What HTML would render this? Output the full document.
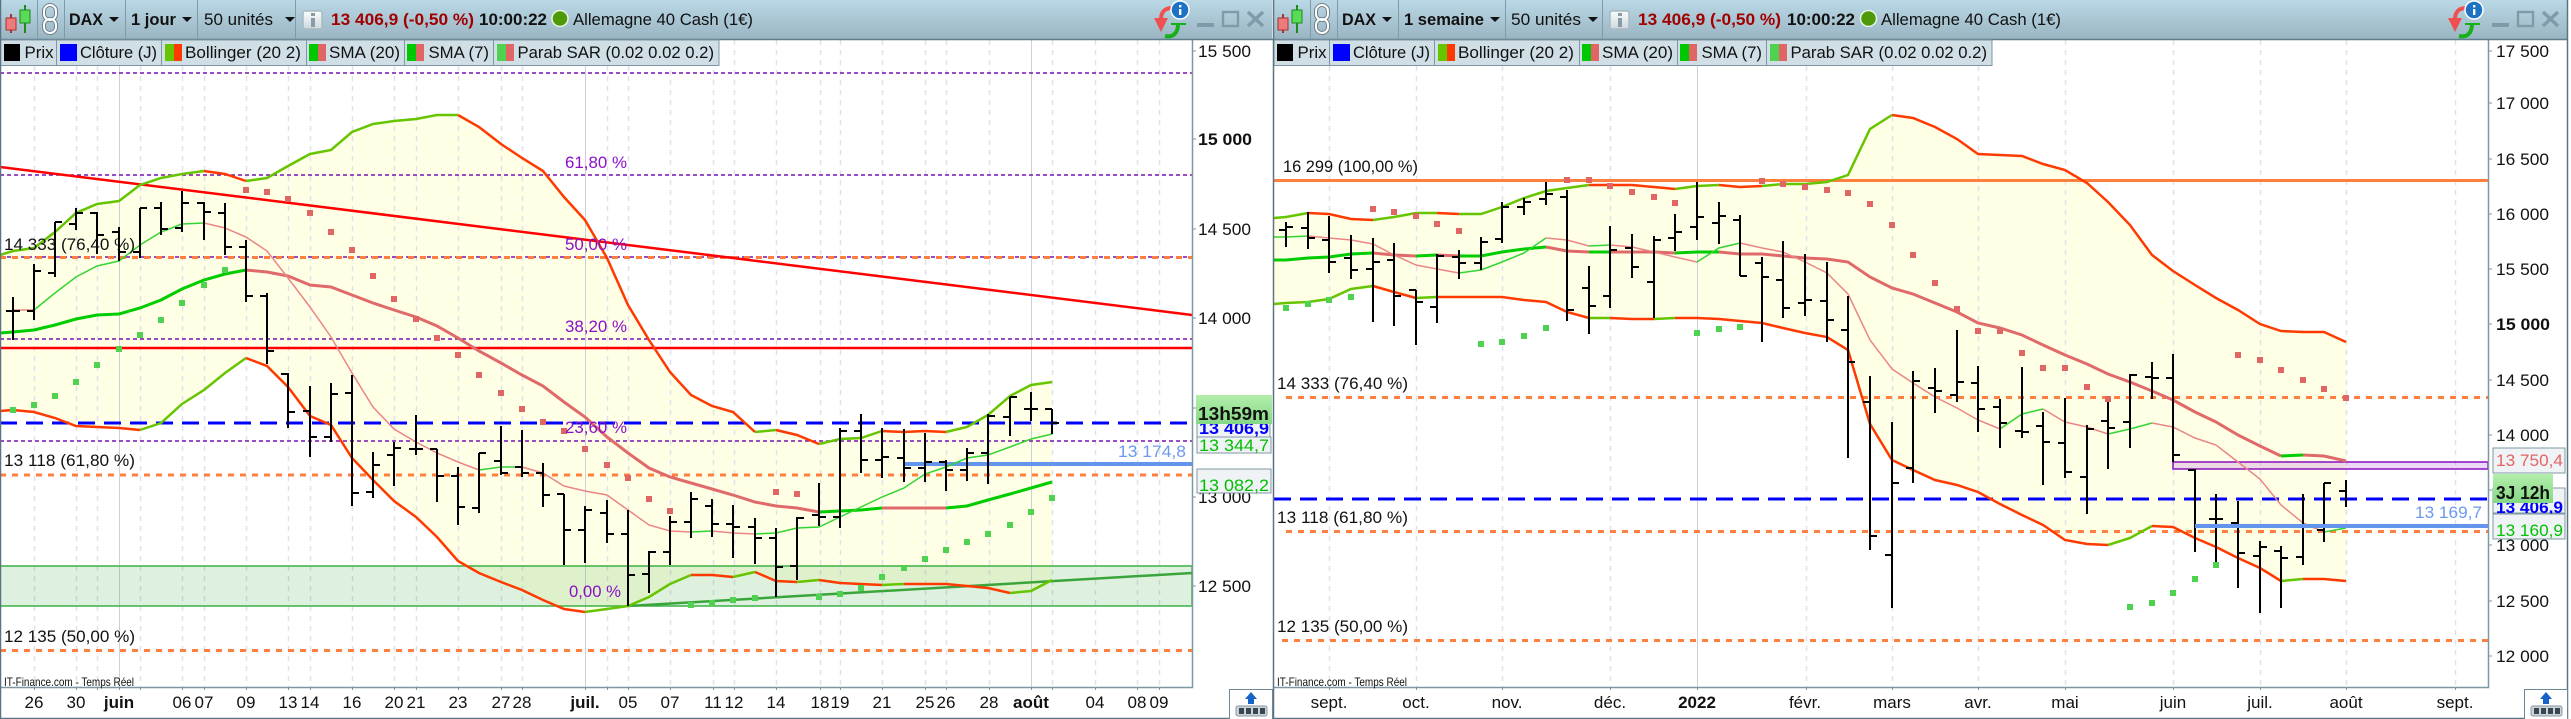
<!DOCTYPE html>
<html lang="fr"><head><meta charset="utf-8"><title>DAX</title>
<style>
html,body{margin:0;padding:0;background:#fff;width:2571px;height:719px;overflow:hidden}
svg{display:block}
text{font-family:"Liberation Sans",sans-serif;font-size:17px;fill:#111}
.b{font-weight:bold}
.p{fill:#8a10c8}
.m{text-anchor:middle}
</style></head><body>
<svg xmlns="http://www.w3.org/2000/svg" width="2571" height="719" viewBox="0 0 2571 719">
<defs>
<linearGradient id="hg" x1="0" y1="0" x2="0" y2="1"><stop offset="0" stop-color="#bad8e6"/><stop offset="1" stop-color="#9ab5c2"/></linearGradient>
<linearGradient id="gb" x1="0" y1="0" x2="0" y2="1"><stop offset="0" stop-color="#b4eeac"/><stop offset="1" stop-color="#84d884"/></linearGradient>
<linearGradient id="ib" x1="0" y1="0" x2="0" y2="1"><stop offset="0" stop-color="#fafcfc"/><stop offset="1" stop-color="#ccd8de"/></linearGradient>
<g id="cnd">
<path d="M11 14V33" stroke="#a83232" stroke-width="2"/><rect x="6" y="18" width="10" height="12" fill="#ee7a7a" stroke="#a83232"/>
<path d="M25 5V33" stroke="#1d8a1d" stroke-width="2"/><rect x="20" y="10" width="10" height="13" fill="#58dc58" stroke="#1d8a1d"/>
</g>
<g id="chn" fill="none">
<rect x="44" y="5" width="12" height="15" rx="6" stroke="#6f7f88" stroke-width="4"/><rect x="44" y="19" width="12" height="14" rx="6" stroke="#6f7f88" stroke-width="4"/>
<rect x="44" y="5" width="12" height="15" rx="6" stroke="#fff" stroke-width="2"/><rect x="44" y="19" width="12" height="14" rx="6" stroke="#fff" stroke-width="2"/>
</g>
<g id="inf"><rect x="303" y="11" width="19" height="18" rx="2" fill="url(#ib)" stroke="#a9b9c2" stroke-width="1.5"/><rect x="311" y="18" width="4" height="9" fill="#8b9ba5"/><rect x="311" y="13" width="4" height="3" fill="#8b9ba5"/></g>
<g id="ref">
<path d="M1172 8C1165 8 1161 12 1161 19" fill="none" stroke="#f05050" stroke-width="4"/><path d="M1154 18H1168L1161 32Z" fill="#f05050"/>
<path d="M1165 36C1174 38 1178 32 1178 24" fill="none" stroke="#18b018" stroke-width="4"/><path d="M1171 24H1186" stroke="#18b018" stroke-width="2"/>
<circle cx="1180" cy="10" r="9" fill="#1c72c4" stroke="#fff" stroke-width="1.5"/><rect x="1179" y="9" width="2.4" height="6" fill="#fff"/><rect x="1179" y="5" width="2.4" height="2.4" fill="#fff"/>
</g>
<g id="win"><rect x="1197" y="23" width="17" height="4" fill="#7f9aa8"/><rect x="1223" y="12" width="15" height="14" fill="none" stroke="#7f9aa8" stroke-width="2.4"/><path d="M1248 12L1263 26M1263 12L1248 26" stroke="#7f9aa8" stroke-width="3.4"/></g>
<g id="btn"><rect x="1229.500" y="689.500" width="43" height="30" fill="#fff" stroke="#6d8794"/><path d="M1251 692L1257 699H1254V704H1248V699H1245Z" fill="#1764c8"/><rect x="1236" y="706" width="31" height="10" rx="2" fill="#c9d3d8" stroke="#8b9aa3"/><path d="M1239 708h5v6h-5zM1246 708h5v6h-5zM1253 708h5v6h-5zM1260 708h5v6h-5z" fill="#3b4650"/></g>
</defs>

<rect width="2571" height="719" fill="#fff"/>

<!-- LEFT PANEL fills -->
<path fill="#ffffe6" d="M0 255L13 251 34 248 55 232 76 213 97 204 119 201 140 185 161 178 182 174 204 171 225 174 246 181 267 178 288 166 310 154 331 150 352 132 373 124 394 121 416 119 437 115 458 115 479 127 501 144 522 158 543 171 564 197 585 220 607 258 628 305 649 340 670 372 691 395 712 406 733 412 755 432 776 430 797 435 819 444 840 439 861 438 882 431 904 432 925 431 946 432 967 427 988 415 1010 396 1031 385 1052 382V580L1031 591 1010 593 988 588 967 586 946 584 925 584 904 584 882 585 861 584 840 583 819 580 797 582 776 581 755 572 733 577 712 575 691 575 670 584 649 597 628 606 607 609 585 612 564 609 543 600 522 590 501 582 479 573 458 561 437 537 416 517 394 501 373 480 352 458 331 425 310 416 288 387 267 366 246 358 225 373 204 390 182 404 161 423 140 430 119 428 97 427 76 426 55 418 34 412 13 410 0 411Z"/>

<!-- LEFT grid -->
<path stroke="#e1e1e9" stroke-width="1.500" stroke-dasharray="5 5" fill="none" d="M34.500 66V687M76.500 66V687M97.500 66V687M140.500 66V687M182.500 66V687M204.500 66V687M246.500 66V687M288.500 66V687M310.500 66V687M352.500 66V687M394.500 66V687M416.500 66V687M458.500 66V687M501.500 66V687M522.500 66V687M607.500 66V687M628.500 66V687M670.500 40V687M713.500 40V687M734.500 40V687M776.500 40V687M820.500 40V687M840.500 40V687M882.500 40V687M925.500 40V687M946.500 40V687M989.500 40V687M1052.500 40V687M1095.500 40V687M1137.500 40V687M1159.500 40V687"/>
<path stroke="#cfcfdc" stroke-width="1" fill="none" d="M119.500 66V687M585.500 66V687M1031.500 40V687"/>

<!-- LEFT band -->
<rect x="0" y="566" width="1192" height="40" fill="#2fa83a" fill-opacity=".16" stroke="#3cb043" stroke-width="1.500"/>

<!-- LEFT hlines -->
<path fill="none" stroke="#7a11b0" stroke-width="1.500" stroke-dasharray="4 3" d="M0 73H1192M0 175H1192M0 257H1192M0 339H1192M0 441H1192"/>
<path fill="none" stroke="#ff7f3f" stroke-width="3" stroke-dasharray="6 6" d="M0 257.500H1192M0 475H1192M0 650.500H1192"/>
<path fill="none" stroke="#ff0000" stroke-width="2.500" d="M0 348H1192M0 167L1192 315"/>
<path fill="none" stroke="#3aa53a" stroke-width="2.500" d="M628 606L1192 573"/>
<path fill="none" stroke="#0000ff" stroke-width="3" stroke-dasharray="17 9" d="M0 423H1192"/>
<path fill="none" stroke="#6495ed" stroke-width="4" d="M904 464H1192"/>

<!-- LEFT bollinger -->
<path fill="none" stroke="#e06a6a" stroke-width="3" d="M246 270L267 272 288 276 310 285 331 287 352 295 373 303 394 310 416 317 437 326 458 338 479 351 501 363 522 375 543 386 564 402 585 417 607 437 628 453 649 468 670 477 691 483 712 489 733 495 755 502 776 506 797 508 819 512M882 508H946"/>
<path fill="none" stroke="#00cc00" stroke-width="3" d="M0 333L13 332 34 330 55 325 76 319 97 315 119 314 140 308 161 300 182 289 204 280 225 274 246 270M819 512L840 511 861 510 882 508M946 508L967 506 988 500 1010 494 1031 488 1052 482"/>
<path fill="none" stroke="#ea8686" stroke-width="1.500" d="M13 310H34M204 223L225 228 246 237 267 251 288 278 310 307 331 337 352 373 373 407 394 429 416 442 437 453 458 462 479 470M522 467L543 473 564 486 585 491 607 495 628 510 649 525 670 531 691 532M712 531L733 533 755 534"/>
<path fill="none" stroke="#33d433" stroke-width="1.500" d="M34 310L55 293 76 277 97 266 119 261 140 245 161 232 182 224 204 223M479 470L501 467H522M691 532L712 531M755 534L776 533 797 528 819 527 840 517 861 507 882 497 904 488 925 474 946 467 967 458 988 455 1010 447 1031 439 1052 434"/>
<path fill="none" stroke="#66c400" stroke-width="2.500" d="M0 255L13 251 34 248 55 232 76 213 97 204 119 201 140 185 161 178 182 174 204 171M246 181L267 178 288 166 310 154 331 150 352 132 373 124 394 121 416 119 437 115 458 115M755 432L776 430M819 444L840 439 861 438 882 431M946 432L967 427 988 415 1010 396 1031 385 1052 382M140 430L161 423 182 404 204 390 225 373 246 358M585 612L607 609 628 606 649 597 670 584 691 575M733 577L755 572M797 582L819 580M882 585L904 584M1010 593L1031 591 1052 580"/>
<path fill="none" stroke="#ff3a00" stroke-width="2.500" d="M204 171L225 174 246 181M458 115L479 127 501 144 522 158 543 171 564 197 585 220 607 258 628 305 649 340 670 372 691 395 712 406 733 412 755 432M776 430L797 435 819 444M882 431L904 432 925 431 946 432M0 411L13 410 34 412 55 418 76 426 97 427 119 428 140 430M246 358L267 366 288 387 310 416 331 425 352 458 373 480 394 501 416 517 437 537 458 561 479 573 501 582 522 590 543 600 564 609 585 612M691 575L712 575 733 577M755 572L776 581 797 582M819 580L840 583 861 584 882 585M904 584L925 584 946 584 967 586 988 588 1010 593"/>

<!-- LEFT bars -->
<path fill="none" stroke="#000" stroke-width="2" d="M13 297V340M6 311h14M34 264V320M27 311h7M34 271h7M55 222V277M48 273h7M55 222h7M76 208V230M69 224h7M76 213h7M97 212V254M90 213h7M97 235h7M119 227V261M112 232h7M119 252h7M140 208V258M133 252h7M140 208h7M161 202V235M154 208h7M161 229h7M182 191V232M175 228h7M182 203h7M204 202V240M197 203h7M204 212h7M225 203V255M218 213h7M225 247h7M246 240V302M239 247h7M246 296h7M267 293V364M260 296h7M267 351h7M288 373V428M281 374h7M288 412h7M310 386V457M303 411h7M310 437h7M331 383V442M324 437h7M331 394h7M352 375V506M345 393h7M352 493h7M373 452V498M366 492h7M373 465h7M394 442V486M387 455h7M394 448h7M416 415V455M409 449h14M437 449V502M430 449h7M437 476h7M458 467V525M451 476h7M458 507h7M479 453V513M472 508h7M479 453h7M501 426V475M494 461h7M501 473h7M522 430V477M515 467h7M522 473h7M543 463V507M536 473h7M543 495h7M564 494V565M557 494h7M564 530h7M585 506V563M578 530h7M585 510h7M607 500V543M600 513h7M607 534h7M628 510V606M621 534h7M628 575h7M649 551V593M642 574h7M649 552h7M670 516V565M663 552h7M670 522h7M691 492V538M684 522h7M691 499h7M712 499V537M705 506h7M712 524h7M733 505V558M726 524h7M733 527h7M755 518V564M748 527h7M755 538h7M776 528V597M769 538h7M776 567h7M797 517V580M790 566h7M797 518h7M819 483V526M812 515h7M819 517h7M840 428V528M833 517h7M840 431h7M861 414V473M854 431h7M861 460h7M882 428V478M875 460h7M882 457h7M904 429V482M897 458h7M904 468h7M925 433V482M918 468h7M925 462h7M946 460V491M939 462h7M946 470h7M967 448V481M960 470h7M967 453h7M988 414V484M981 453h7M988 416h7M1010 397V436M1003 417h7M1010 397h7M1031 392V421M1024 409h14M1052 409V434M1045 409h7M1052 423h7"/>

<!-- LEFT SAR -->
<path fill="none" stroke="#4fd24f" stroke-width="6" d="M10 410h6M31 405h6M52 396h6M73 382h6M94 365h6M116 349h6M137 335h6M158 320h6M179 303h6M201 285h6M222 270h6M688 605h6M709 603h6M730 600h6M752 598h6M816 597h6M837 594h6M858 588h6M879 577h6M901 568h6M922 559h6M943 550h6M964 542h6M985 534h6M1007 525h6M1028 512h6M1049 498h6"/>
<path fill="none" stroke="#e06666" stroke-width="6" d="M243 190h6M264 192h6M285 199h6M307 213h6M328 232h6M349 250h6M370 276h6M391 299h6M413 319h6M434 338h6M455 355h6M476 375h6M498 393h6M519 409h6M540 422h6M561 431h6M582 449h6M604 465h6M625 478h6M646 499h6M667 511h6M773 492h6M794 494h6"/>

<!-- RIGHT panel fill -->
<path fill="#ffffe6" d="M1274 218L1286 217 1308 213 1329 214 1351 219 1373 220 1394 217 1416 213 1437 213 1459 214 1481 214 1502 207 1524 198 1546 191 1567 188 1589 185 1610 185 1632 185 1654 187 1675 189 1697 186 1719 185 1740 187 1762 186 1783 184 1805 184 1827 182 1848 175 1870 129 1892 115 1913 118 1935 127 1957 139 1978 154 2000 155 2022 156 2043 164 2065 170 2087 183 2108 202 2130 225 2152 255 2173 271 2195 285 2216 298 2238 310 2260 324 2281 331 2303 332 2324 332 2346 342V581L2324 579 2303 579 2281 581 2260 568 2238 558 2216 547 2195 538 2173 527 2152 526 2130 538 2108 545 2087 544 2065 540 2043 525 2022 515 2000 504 1978 492 1957 485 1935 480 1913 470 1892 460 1870 424 1848 350 1827 337 1805 333 1783 328 1762 323 1740 321 1719 319 1697 318 1675 318 1654 319 1632 319 1610 318 1589 318 1567 312 1546 302 1524 300 1502 297 1481 297 1459 297 1437 297 1416 298 1394 292 1373 286 1351 289 1329 299 1308 302 1286 303 1274 304Z"/>

<path stroke="#e1e1e9" stroke-width="1.500" stroke-dasharray="5 5" fill="none" d="M1329.500 66V687M1416.500 66V687M1502.500 66V687M1610.500 66V687M1806.500 66V687M1892.500 66V687M1978.500 66V687M2065.500 40V687M2173.500 40V687M2260.500 40V687M2346.500 40V687M2455.500 40V687"/>
<path stroke="#cfcfdc" stroke-width="1" fill="none" d="M1697.500 66V687"/>

<rect x="2173" y="462" width="315" height="7" fill="#a040d8" fill-opacity=".2" stroke="#8a0fc0" stroke-width="1.500"/>
<path fill="none" stroke="#ff7f3f" stroke-width="3" d="M1274 180.500H2488"/>
<path fill="none" stroke="#ff7f3f" stroke-width="3" stroke-dasharray="6 6" d="M1286 397.500H2488M1286 531.500H2488M1282 640.500H2488"/>
<path fill="none" stroke="#0000ff" stroke-width="3" stroke-dasharray="17 9" d="M1274 499H2488"/>

<!-- RIGHT MAs -->
<path fill="none" stroke="#e06a6a" stroke-width="3" d="M1373 253L1394 255 1416 256M1437 255L1459 256M1546 247L1567 251 1589 252M1610 252L1632 252 1654 252 1675 253M1719 252L1740 254 1762 254 1783 256 1805 258 1827 259 1848 262 1870 277 1892 288 1913 294 1935 303 1957 312 1978 323 2000 328 2022 335 2043 345 2065 355 2087 364 2108 374 2130 382 2152 391 2173 400 2195 412 2216 422 2238 435 2260 446 2281 456M2303 455L2324 456 2346 461"/>
<path fill="none" stroke="#00cc00" stroke-width="3" d="M1274 260L1286 260 1308 258 1329 257 1351 254 1373 253M1416 256L1437 255M1459 256L1481 256 1502 252 1524 249 1546 247M1589 252L1610 252M1675 253L1697 252 1719 252M2281 456L2303 455"/>
<path fill="none" stroke="#ea8686" stroke-width="1.500" d="M1308 236L1329 238 1351 240 1373 244 1394 255 1416 265 1437 269 1459 273M1546 238L1567 240 1589 246M1610 245L1632 247 1654 252 1675 257 1697 262M1740 243L1762 248 1783 252 1805 262 1827 273 1848 294 1870 340 1892 369 1913 383 1935 397 1957 408 1978 420 2000 429M2043 409L2065 422 2087 427 2108 434M2152 423L2173 427 2195 438 2216 445 2238 462 2260 479 2281 505 2303 523 2324 532"/>
<path fill="none" stroke="#33d433" stroke-width="1.500" d="M1274 237L1286 237 1308 236M1459 273L1481 270 1502 262 1524 253 1546 238M1589 246L1610 245M1697 262L1719 248 1740 243M2000 429L2022 414 2043 409M2108 434L2130 429 2152 423M2324 532L2346 528"/>
<path fill="none" stroke="#66c400" stroke-width="2.500" d="M1274 218L1286 217 1308 213M1373 220L1394 217 1416 213 1437 213M1459 214L1481 214 1502 207 1524 198 1546 191 1567 188 1589 185M1675 189L1697 186 1719 185M1762 186L1783 184 1805 184 1827 182 1848 175 1870 129 1892 115M1274 304L1286 303 1308 302 1329 299 1351 289 1373 286M1416 298L1437 297M1589 318L1610 318M1654 319L1675 318M2108 545L2130 538 2152 526M2281 581L2303 579"/>
<path fill="none" stroke="#ff3a00" stroke-width="2.500" d="M1308 213L1329 214 1351 219 1373 220M1437 213L1459 214M1589 185L1610 185 1632 185 1654 187 1675 189M1719 185L1740 187 1762 186M1892 115L1913 118 1935 127 1957 139 1978 154 2000 155 2022 156 2043 164 2065 170 2087 183 2108 202 2130 225 2152 255 2173 271 2195 285 2216 298 2238 310 2260 324 2281 331 2303 332 2324 332 2346 342M1373 286L1394 292 1416 298M1437 297L1459 297 1481 297 1502 297 1524 300 1546 302 1567 312 1589 318M1610 318L1632 319 1654 319M1675 318L1697 318 1719 319 1740 321 1762 323 1783 328 1805 333 1827 337 1848 350 1870 424 1892 460 1913 470 1935 480 1957 485 1978 492 2000 504 2022 515 2043 525 2065 540 2087 544 2108 545M2152 526L2173 527 2195 538 2216 547 2238 558 2260 568 2281 581M2303 579L2324 579 2346 581"/>

<!-- RIGHT bars -->
<path fill="none" stroke="#000" stroke-width="2" d="M1286 222V247M1279 230h7M1286 227h7M1308 212V249M1301 228h7M1308 238h7M1329 216V273M1322 240h7M1329 262h7M1351 235V279M1344 258h7M1351 270h7M1373 238V322M1366 269h7M1373 262h7M1394 243V326M1387 260h7M1394 296h7M1416 290V345M1409 290h7M1416 302h7M1437 254V323M1430 307h7M1437 256h7M1459 250V279M1452 257h7M1459 263h7M1481 237V270M1474 263h7M1481 242h7M1502 202V243M1495 239h7M1502 207h7M1524 198V215M1517 207h7M1524 202h7M1546 182V205M1539 199h7M1546 194h7M1567 190V321M1560 197h7M1567 310h7M1589 266V334M1582 288h7M1589 306h7M1610 226V308M1603 296h7M1610 250h7M1632 234V278M1625 248h7M1632 267h7M1654 236V318M1647 282h7M1654 240h7M1675 214V251M1668 238h7M1675 232h7M1697 182V240M1690 227h7M1697 217h7M1719 202V244M1712 223h7M1719 216h7M1740 215V276M1733 220h7M1740 276h7M1762 257V342M1755 263h7M1762 277h7M1783 241V318M1776 280h7M1783 308h7M1805 254V316M1798 303h7M1805 300h7M1827 262V342M1820 301h7M1827 320h7M1848 296V458M1841 330h7M1848 362h7M1870 376V550M1863 402h7M1870 536h7M1892 422V608M1885 555h7M1892 483h7M1913 371V483M1906 468h7M1913 381h7M1935 368V413M1928 388h7M1935 391h7M1957 330V402M1950 395h7M1957 382h7M1978 366V432M1971 383h7M1978 409h7M2000 399V448M1993 407h7M2000 423h7M2022 367V438M2015 431h7M2022 432h7M2043 412V485M2036 426h7M2043 442h7M2065 398V478M2058 443h7M2065 472h7M2087 425V514M2080 477h7M2087 429h7M2108 398V469M2101 421h7M2108 428h7M2130 374V448M2123 422h7M2130 375h7M2152 362V399M2145 377h7M2152 378h7M2173 354V462M2166 378h7M2173 455h7M2195 469V552M2188 470h7M2195 525h7M2216 494V562M2209 519h14M2238 501V588M2231 523h7M2238 553h7M2260 541V613M2253 556h7M2260 547h7M2281 546V608M2274 551h7M2281 558h7M2303 494V565M2296 557h7M2303 523h0M2324 483V542M2317 530h7M2324 483h7M2346 480V507M2339 491h7M2346 498h0"/>
<path fill="none" stroke="#6495ed" stroke-width="4" d="M2195 526H2488"/>

<!-- RIGHT SAR -->
<path fill="none" stroke="#4fd24f" stroke-width="6" d="M1283 308h6M1305 304h6M1326 300h6M1348 297h6M1478 344h6M1499 342h6M1521 336h6M1543 328h6M1694 333h6M1716 329h6M1737 327h6M2127 607h6M2149 603h6M2170 593h6M2192 579h6M2213 565h6"/>
<path fill="none" stroke="#e06666" stroke-width="6" d="M1370 209h6M1391 212h6M1413 216h6M1434 224h6M1456 231h6M1564 180h6M1586 180h6M1607 186h6M1629 192h6M1651 197h6M1672 203h6M1759 181h6M1780 184h6M1802 187h6M1824 190h6M1845 193h6M1867 204h6M1889 225h6M1910 255h6M1932 283h6M1954 309h6M1975 331h6M1997 331h6M2019 353h6M2040 368h6M2062 368h6M2084 387h6M2105 399h6M2235 355h6M2257 360h6M2278 370h6M2300 380h6M2321 389h6M2343 398h6"/>

<!-- axes -->
<path fill="none" stroke="#7f97a3" stroke-width="1.500" d="M1192.500 40V687.500H0M2488.500 40V687.500H1274"/>
<path fill="none" stroke="#7f97a3" d="M1192 51h4M1192 139h4M1192 229h4M1192 318h4M1192 408h4M1192 497h4M1192 586h4M2488 51h4M2488 103h4M2488 159h4M2488 214h4M2488 269h4M2488 324h4M2488 380h4M2488 435h4M2488 490h4M2488 545h4M2488 601h4M2488 656h4M34.500 687v3M76.500 687v3M97.500 687v3M119.500 687v3M140.500 687v3M182.500 687v3M204.500 687v3M246.500 687v3M288.500 687v3M310.500 687v3M352.500 687v3M394.500 687v3M416.500 687v3M458.500 687v3M501.500 687v3M522.500 687v3M585.500 687v3M607.500 687v3M628.500 687v3M670.500 687v3M713.500 687v3M734.500 687v3M776.500 687v3M820.500 687v3M840.500 687v3M882.500 687v3M925.500 687v3M946.500 687v3M989.500 687v3M1031.500 687v3M1052.500 687v3M1095.500 687v3M1137.500 687v3M1159.500 687v3M1329.500 687v3M1416.500 687v3M1502.500 687v3M1610.500 687v3M1697.500 687v3M1806.500 687v3M1892.500 687v3M1978.500 687v3M2065.500 687v3M2173.500 687v3M2260.500 687v3M2346.500 687v3M2455.500 687v3"/>

<!-- HEADERS -->
<rect x="0" y="0" width="1272" height="39" fill="url(#hg)"/>
<rect x="1274" y="0" width="1293" height="39" fill="url(#hg)"/>
<path stroke="#5f7d8c" stroke-width="1.500" fill="none" d="M0 39.500H2568"/>
<path stroke="#7f9aa8" fill="none" d="M37.500 0V39M64.500 0V39M125.500 0V39M197.500 0V39M295.500 0V39M1310.500 0V39M1337.500 0V39M1398.500 0V39M1505.500 0V39M1602.500 0V39"/>
<use href="#cnd"/><use href="#chn"/><use href="#inf"/><use href="#ref"/><use href="#win"/>
<use href="#cnd" x="1272"/><use href="#chn" x="1272"/><use href="#inf" x="1307"/><use href="#ref" x="1294"/><use href="#win" x="1295"/>
<path fill="#111" d="M109 17h10l-5 5zM182 17h10l-5 5zM285 17h10l-5 5zM1382 17h10l-5 5zM1490 17h10l-5 5zM1588 17h10l-5 5z"/>
<circle cx="560" cy="18.500" r="8" fill="#4e9a06" stroke="#e8f4e8" stroke-width="1.500"/>
<circle cx="1868.500" cy="18.500" r="8" fill="#4e9a06" stroke="#e8f4e8" stroke-width="1.500"/>

<text class="b" x="69" y="25" textLength="34" lengthAdjust="spacingAndGlyphs">DAX</text>
<text class="b" x="131" y="25" textLength="45" lengthAdjust="spacingAndGlyphs">1 jour</text>
<text x="204" y="25" textLength="69" lengthAdjust="spacingAndGlyphs">50 unités</text>
<text class="b" x="331" y="25" textLength="143" lengthAdjust="spacingAndGlyphs" style="fill:#a00000">13 406,9 (-0,50 %)</text>
<text class="b" x="479" y="25" textLength="68" lengthAdjust="spacingAndGlyphs">10:00:22</text>
<text x="573" y="25" textLength="180" lengthAdjust="spacingAndGlyphs">Allemagne 40 Cash (1€)</text>

<text class="b" x="1342" y="25" textLength="34" lengthAdjust="spacingAndGlyphs">DAX</text>
<text class="b" x="1404" y="25" textLength="80" lengthAdjust="spacingAndGlyphs">1 semaine</text>
<text x="1511" y="25" textLength="70" lengthAdjust="spacingAndGlyphs">50 unités</text>
<text class="b" x="1638" y="25" textLength="143" lengthAdjust="spacingAndGlyphs" style="fill:#a00000">13 406,9 (-0,50 %)</text>
<text class="b" x="1787" y="25" textLength="68" lengthAdjust="spacingAndGlyphs">10:00:22</text>
<text x="1881" y="25" textLength="180" lengthAdjust="spacingAndGlyphs">Allemagne 40 Cash (1€)</text>

<!-- LEGENDS -->
<rect x="0" y="40" width="719" height="25.500" fill="#d0dee6" stroke="#7f97a3"/>
<rect x="1274" y="40" width="718" height="25.500" fill="#d0dee6" stroke="#7f97a3"/>
<path stroke="#7f97a3" fill="none" d="M56.500 40V65M161.500 40V65M306.500 40V65M404.500 40V65M493.500 40V65M1329.500 40V65M1434.500 40V65M1579.500 40V65M1677.500 40V65M1766.500 40V65"/>
<rect x="4" y="44" width="16" height="17" fill="#000"/><rect x="60" y="44" width="17" height="17" fill="#0000ff"/>
<rect x="165" y="44" width="9" height="17" fill="#66c400"/><rect x="174" y="44" width="8" height="17" fill="#ff3a00"/>
<rect x="309" y="44" width="9" height="17" fill="#00c800"/><rect x="318" y="44" width="8" height="17" fill="#e06666"/>
<rect x="407" y="44" width="9" height="17" fill="#00c800"/><rect x="416" y="44" width="8" height="17" fill="#e06666"/>
<rect x="497" y="44" width="9" height="17" fill="#4fd24f"/><rect x="506" y="44" width="8" height="17" fill="#e06666"/>
<rect x="1277" y="44" width="16" height="17" fill="#000"/><rect x="1333" y="44" width="17" height="17" fill="#0000ff"/>
<rect x="1438" y="44" width="9" height="17" fill="#66c400"/><rect x="1447" y="44" width="8" height="17" fill="#ff3a00"/>
<rect x="1582" y="44" width="9" height="17" fill="#00c800"/><rect x="1591" y="44" width="8" height="17" fill="#e06666"/>
<rect x="1680" y="44" width="9" height="17" fill="#00c800"/><rect x="1689" y="44" width="8" height="17" fill="#e06666"/>
<rect x="1770" y="44" width="9" height="17" fill="#4fd24f"/><rect x="1779" y="44" width="8" height="17" fill="#e06666"/>

<text x="24.500" y="58" textLength="29" lengthAdjust="spacingAndGlyphs">Prix</text>
<text x="80" y="58" textLength="77" lengthAdjust="spacingAndGlyphs">Clôture (J)</text>
<text x="185" y="58" textLength="116" lengthAdjust="spacingAndGlyphs">Bollinger (20 2)</text>
<text x="329" y="58" textLength="71" lengthAdjust="spacingAndGlyphs">SMA (20)</text>
<text x="428.500" y="58" textLength="60.500" lengthAdjust="spacingAndGlyphs">SMA (7)</text>
<text x="517.500" y="58" textLength="196.500" lengthAdjust="spacingAndGlyphs">Parab SAR (0.02 0.02 0.2)</text>
<text x="1297.500" y="58" textLength="29" lengthAdjust="spacingAndGlyphs">Prix</text>
<text x="1353" y="58" textLength="77" lengthAdjust="spacingAndGlyphs">Clôture (J)</text>
<text x="1458" y="58" textLength="116" lengthAdjust="spacingAndGlyphs">Bollinger (20 2)</text>
<text x="1602" y="58" textLength="71" lengthAdjust="spacingAndGlyphs">SMA (20)</text>
<text x="1701.500" y="58" textLength="60.500" lengthAdjust="spacingAndGlyphs">SMA (7)</text>
<text x="1790.500" y="58" textLength="196.500" lengthAdjust="spacingAndGlyphs">Parab SAR (0.02 0.02 0.2)</text>

<!-- chart labels LEFT -->
<text class="p" x="565" y="168" textLength="62" lengthAdjust="spacingAndGlyphs">61,80 %</text>
<text class="p" x="565" y="250" textLength="62" lengthAdjust="spacingAndGlyphs">50,00 %</text>
<text class="p" x="565" y="332" textLength="62" lengthAdjust="spacingAndGlyphs">38,20 %</text>
<text class="p" x="565" y="433" textLength="62" lengthAdjust="spacingAndGlyphs">23,60 %</text>
<text class="p" x="569" y="597" textLength="52" lengthAdjust="spacingAndGlyphs">0,00 %</text>
<text x="4" y="250" textLength="131" lengthAdjust="spacingAndGlyphs">14 333 (76,40 %)</text>
<text x="4" y="466" textLength="131" lengthAdjust="spacingAndGlyphs">13 118 (61,80 %)</text>
<text x="4" y="642" textLength="131" lengthAdjust="spacingAndGlyphs">12 135 (50,00 %)</text>
<text x="4" y="686" textLength="130" lengthAdjust="spacingAndGlyphs" style="font-size:12px">IT-Finance.com - Temps Réel</text>
<text x="1118" y="457" textLength="68" lengthAdjust="spacingAndGlyphs" style="fill:#6d9aef">13 174,8</text>

<!-- chart labels RIGHT -->
<text x="1283" y="172" textLength="135" lengthAdjust="spacingAndGlyphs">16 299 (100,00 %)</text>
<text x="1277" y="389" textLength="131" lengthAdjust="spacingAndGlyphs">14 333 (76,40 %)</text>
<text x="1277" y="523" textLength="131" lengthAdjust="spacingAndGlyphs">13 118 (61,80 %)</text>
<text x="1277" y="632" textLength="131" lengthAdjust="spacingAndGlyphs">12 135 (50,00 %)</text>
<text x="1277" y="686" textLength="130" lengthAdjust="spacingAndGlyphs" style="font-size:12px">IT-Finance.com - Temps Réel</text>
<text x="2415" y="518" textLength="67" lengthAdjust="spacingAndGlyphs" style="fill:#6d9aef">13 169,7</text>

<!-- Y axis LEFT -->
<text x="1198" y="57" textLength="53" lengthAdjust="spacingAndGlyphs">15 500</text>
<text class="b" x="1198" y="145" textLength="54" lengthAdjust="spacingAndGlyphs">15 000</text>
<text x="1198" y="235" textLength="53" lengthAdjust="spacingAndGlyphs">14 500</text>
<text x="1198" y="324" textLength="53" lengthAdjust="spacingAndGlyphs">14 000</text>
<text x="1198" y="503" textLength="53" lengthAdjust="spacingAndGlyphs">13 000</text>
<text x="1198" y="592" textLength="53" lengthAdjust="spacingAndGlyphs">12 500</text>
<rect x="1197" y="418" width="73" height="19" fill="#f0f3f5" stroke="#7f97a3"/>
<text class="b" x="1199" y="434" textLength="70" lengthAdjust="spacingAndGlyphs" style="fill:#0000ff">13 406,9</text>
<rect x="1196" y="395" width="76" height="29" fill="url(#gb)"/>
<text class="b" x="1198" y="420" textLength="71" lengthAdjust="spacingAndGlyphs" style="font-size:18px">13h59m</text>
<rect x="1197" y="437" width="74" height="16" fill="#f0f3f5" stroke="#7f97a3"/>
<text x="1199" y="451" textLength="70" lengthAdjust="spacingAndGlyphs" style="fill:#00c000">13 344,7</text>
<rect x="1197" y="469" width="74" height="24" fill="#f0f3f5" stroke="#7f97a3"/>
<text x="1199" y="491" textLength="70" lengthAdjust="spacingAndGlyphs" style="fill:#00c000">13 082,2</text>

<!-- Y axis RIGHT -->
<text x="2496" y="57" textLength="53" lengthAdjust="spacingAndGlyphs">17 500</text>
<text x="2496" y="109" textLength="53" lengthAdjust="spacingAndGlyphs">17 000</text>
<text x="2496" y="165" textLength="53" lengthAdjust="spacingAndGlyphs">16 500</text>
<text x="2496" y="220" textLength="53" lengthAdjust="spacingAndGlyphs">16 000</text>
<text x="2496" y="275" textLength="53" lengthAdjust="spacingAndGlyphs">15 500</text>
<text class="b" x="2496" y="330" textLength="54" lengthAdjust="spacingAndGlyphs">15 000</text>
<text x="2496" y="386" textLength="53" lengthAdjust="spacingAndGlyphs">14 500</text>
<text x="2496" y="441" textLength="53" lengthAdjust="spacingAndGlyphs">14 000</text>
<text x="2496" y="551" textLength="53" lengthAdjust="spacingAndGlyphs">13 000</text>
<text x="2496" y="607" textLength="53" lengthAdjust="spacingAndGlyphs">12 500</text>
<text x="2496" y="662" textLength="53" lengthAdjust="spacingAndGlyphs">12 000</text>
<rect x="2493" y="448" width="72" height="25" fill="#f0f3f5" stroke="#7f97a3"/>
<text x="2496" y="466" textLength="67" lengthAdjust="spacingAndGlyphs" style="fill:#e06666">13 750,4</text>
<rect x="2493" y="488" width="72" height="25" fill="#f0f3f5" stroke="#7f97a3"/>
<text class="b" x="2496" y="513" textLength="67" lengthAdjust="spacingAndGlyphs" style="fill:#0000ff">13 406,9</text>
<rect x="2493" y="474" width="60" height="29" fill="url(#gb)"/>
<text class="b" x="2496" y="499" textLength="54" lengthAdjust="spacingAndGlyphs" style="font-size:18px">3J 12h</text>
<rect x="2493" y="514" width="72" height="25" fill="#f0f3f5" stroke="#7f97a3"/>
<text x="2496" y="536" textLength="67" lengthAdjust="spacingAndGlyphs" style="fill:#00c000">13 160,9</text>

<!-- X labels LEFT -->
<text class="m" x="34" y="708">26</text><text class="m" x="76" y="708">30</text><text class="m b" x="119" y="708">juin</text>
<text class="m" x="182" y="708">06</text><text class="m" x="204" y="708">07</text><text class="m" x="246" y="708">09</text>
<text class="m" x="288" y="708">13</text><text class="m" x="310" y="708">14</text><text class="m" x="352" y="708">16</text>
<text class="m" x="394" y="708">20</text><text class="m" x="416" y="708">21</text><text class="m" x="458" y="708">23</text>
<text class="m" x="501" y="708">27</text><text class="m" x="522" y="708">28</text><text class="m b" x="585" y="708">juil.</text>
<text class="m" x="628" y="708">05</text><text class="m" x="670" y="708">07</text><text class="m" x="713" y="708">11</text>
<text class="m" x="734" y="708">12</text><text class="m" x="776" y="708">14</text><text class="m" x="820" y="708">18</text>
<text class="m" x="840" y="708">19</text><text class="m" x="882" y="708">21</text><text class="m" x="925" y="708">25</text>
<text class="m" x="946" y="708">26</text><text class="m" x="989" y="708">28</text><text class="m b" x="1031" y="708">août</text>
<text class="m" x="1095" y="708">04</text><text class="m" x="1137" y="708">08</text><text class="m" x="1159" y="708">09</text>

<!-- X labels RIGHT -->
<text class="m" x="1329" y="708">sept.</text><text class="m" x="1416" y="708">oct.</text><text class="m" x="1507" y="708">nov.</text>
<text class="m" x="1610" y="708">déc.</text><text class="m b" x="1697" y="708">2022</text><text class="m" x="1805" y="708">févr.</text>
<text class="m" x="1892" y="708">mars</text><text class="m" x="1978" y="708">avr.</text><text class="m" x="2065" y="708">mai</text>
<text class="m" x="2173" y="708">juin</text><text class="m" x="2260" y="708">juil.</text><text class="m" x="2346" y="708">août</text>
<text class="m" x="2455" y="708">sept.</text>

<!-- borders -->
<path fill="none" stroke="#5a7482" stroke-width="1.500" d="M0.500 0V718.500H1273.500V0M1273.500 718.500H2567.500V0"/>
<use href="#btn"/><use href="#btn" x="1295"/>
</svg>
</body></html>
